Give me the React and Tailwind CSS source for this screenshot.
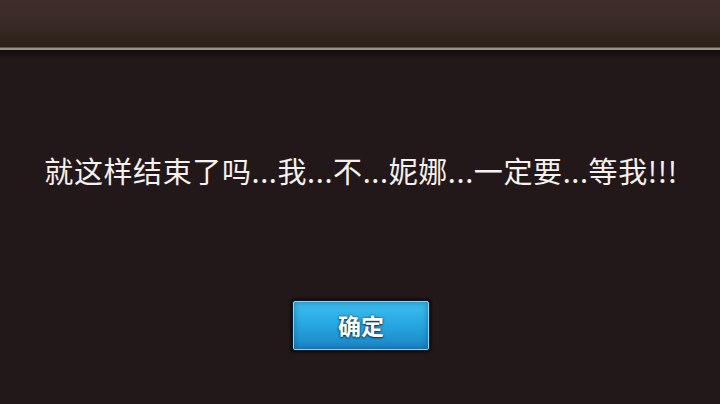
import React from "react";

const cjk = { fontFamily: '"Noto Sans CJK SC", "Noto Sans", sans-serif' };

export default function App() {
  return (
    <div className="w-[720px] h-[404px] flex flex-col bg-[#221719] overflow-hidden" style={cjk}>
      {/* top frame bar */}
      <div className="h-[47px] shrink-0 bg-gradient-to-b from-[#3f2d2c] via-[#3a2b28] to-[#2a2017]" />
      <div className="h-[1px] shrink-0 bg-[#5e564c]" />
      <div className="h-[2px] shrink-0 bg-[#9a9084]" />
      <div className="h-[10px] shrink-0 bg-gradient-to-b from-[#120d0c] to-[#221719]" />

      {/* dialog text */}
      <div className="h-[130px] shrink-0 flex items-end justify-center pl-[2px]">
        <p className="text-[29px] leading-[40px] text-[#f4f1ee] tracking-[0.6px] whitespace-nowrap">
          就这样结束了吗...我...不...妮娜...一定要...等我!!!
        </p>
      </div>

      <div className="flex-1 flex justify-center pt-[110px] pl-[2px]">
        <button className="w-[138px] h-[51px] rounded-[3px] p-[1px] bg-[#0c1a24] shadow-[0_0_3px_1px_rgba(0,0,0,0.8)]">
          <div className="w-full h-full rounded-[2px] border border-[#7fd6f6] bg-gradient-to-b from-[#3dbdee] via-[#25a6e0] to-[#1c84c4] flex items-center justify-center shadow-[inset_0_0_6px_rgba(10,60,100,0.5)]">
            <span className="text-[23px] font-bold text-white [text-shadow:0_1px_2px_#0a3550,0_0_2px_#0a3550]">
              确定
            </span>
          </div>
        </button>
      </div>
    </div>
  );
}
